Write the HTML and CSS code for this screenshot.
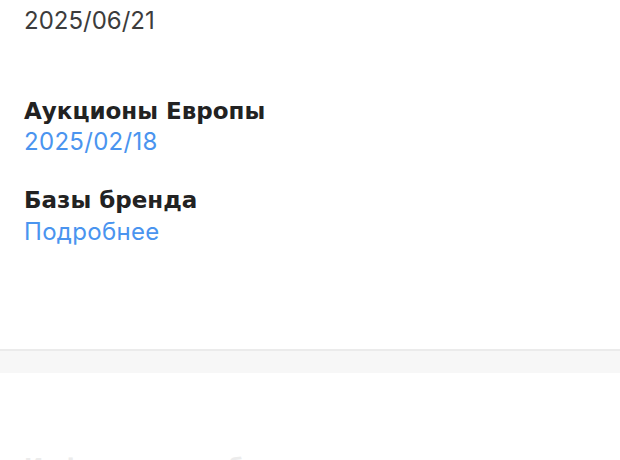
FILE: index.html
```html
<!DOCTYPE html>
<html lang="ru">
<head>
<meta charset="utf-8">
<link rel="stylesheet" href="styles.css">
</head>
<body>
<section class="card">
  <div class="value value-muted">2025/06/21</div>
  <div class="group">
    <div class="label">Аукционы Европы</div>
    <div class="value value-link">2025/02/18</div>
  </div>
  <div class="group group-tight">
    <div class="label">Базы бренда</div>
    <div class="value value-link">Подробнее</div>
  </div>
</section>
<div class="spacer"></div>
<section class="card card-next">
  <div class="label label-faint">Информация о бренде</div>
</section>
</body>
</html>
```

FILE: styles.css
```css
html, body {
  margin: 0;
  padding: 0;
  background: #ffffff;
  font-family: Inter, "Noto Sans", "Liberation Sans", sans-serif;
  overflow: hidden;
}

.card {
  background: #ffffff;
  padding: 5px 24px 0;
  height: 351px;
  box-sizing: border-box;
  border-bottom: 2px solid #ebebeb;
}

.value {
  font-size: 24px;
  line-height: 32px;
}

.value-muted {
  color: #3c3c3c;
}

.value-link {
  color: #4a94ef;
  letter-spacing: 0.3px;
}

.group {
  margin-top: 59px;
}

.group-tight {
  margin-top: 27px;
}

.label {
  font-family: "DejaVu Sans", "Liberation Sans", sans-serif;
  font-size: 23px;
  font-weight: 700;
  line-height: 30px;
  color: #222222;
}

.group-tight .label + .value {
  margin-top: 1px;
}

.spacer {
  height: 22px;
  background: #f7f7f7;
}

.card-next {
  height: auto;
  border-bottom: none;
  padding-top: 79px;
}

.label-faint {
  color: #ececec;
}
```
